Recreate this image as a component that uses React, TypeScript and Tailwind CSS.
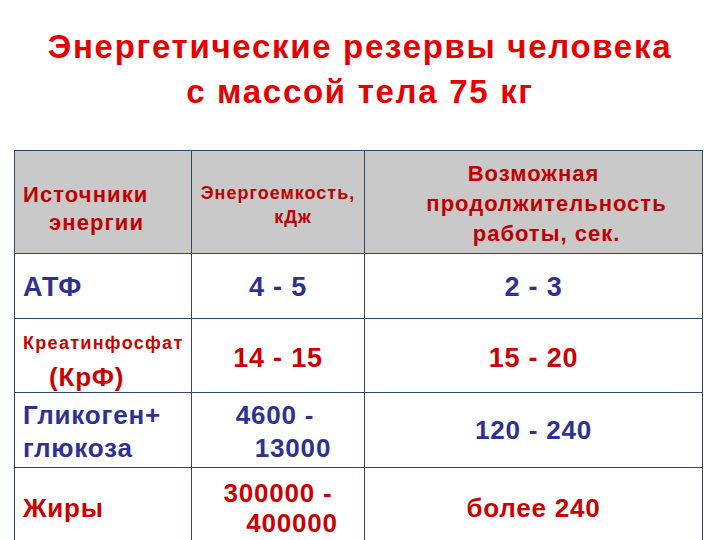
const font = { fontFamily: '"Liberation Sans", Arial, sans-serif' };

function Line({ children, className = "" }: { children: React.ReactNode; className?: string }) {
  return <div className={"whitespace-nowrap " + className}>{children}</div>;
}

export default function App() {
  const cell = "border border-[#2b4b6b] p-0 align-middle";
  return (
    <div className="w-[720px] h-[540px] overflow-hidden bg-white font-bold" style={font}>
      <div className="h-[150px] pt-[24px] text-center text-[33px] leading-[45px] tracking-[1.7px] text-[#e60000]">
        <div>Энергетические резервы человека</div>
        <div>с массой тела 75 кг</div>
      </div>
      <table className="ml-[14px] w-[688px] table-fixed border-collapse">
        <colgroup>
          <col className="w-[177px]" />
          <col className="w-[173px]" />
          <col className="w-[338px]" />
        </colgroup>
        <tbody>
          <tr className="h-[103px] bg-[#c9c9c9] text-[#c00000]">
            <td className={cell}>
              <div className="pt-[14px] pl-[8px] text-[22px] leading-[28px] tracking-[1.1px]">
                <Line>Источники</Line>
                <Line className="pl-[26px]">энергии</Line>
              </div>
            </td>
            <td className={cell}>
              <div className="pt-[6px] text-center text-[18px] leading-[24px] tracking-[1px]">
                <Line>Энергоемкость,</Line>
                <Line className="pl-[30px]">кДж</Line>
              </div>
            </td>
            <td className={cell}>
              <div className="pt-[4px] text-center text-[22px] leading-[30px] tracking-[1px]">
                <Line>Возможная</Line>
                <Line className="pl-[26px]">продолжительность</Line>
                <Line className="pl-[26px]">работы, сек.</Line>
              </div>
            </td>
          </tr>
          <tr className="h-[65px] text-[#2e3192] text-[27px] leading-[30px] tracking-[0.8px]">
            <td className={cell}>
              <div className="pl-[8px] pt-[2px]">АТФ</div>
            </td>
            <td className={cell}>
              <div className="pt-[2px] text-center">4 - 5</div>
            </td>
            <td className={cell}>
              <div className="pt-[2px] text-center">2 - 3</div>
            </td>
          </tr>
          <tr className="h-[74px] text-[#cc0000]">
            <td className={cell}>
              <div className="pl-[8px] pt-[12px]">
                <Line className="text-[18px] leading-[22px] tracking-[1.3px]">Креатинфосфат</Line>
                <Line className="mt-[8px] pl-[26px] text-[26px] leading-[30px] tracking-[0.8px]">(КрФ)</Line>
              </div>
            </td>
            <td className={cell}>
              <div className="pt-[4px] text-center text-[27px] leading-[30px] tracking-[0.8px]">14 - 15</div>
            </td>
            <td className={cell}>
              <div className="pt-[4px] text-center text-[27px] leading-[30px] tracking-[0.8px]">15 - 20</div>
            </td>
          </tr>
          <tr className="h-[75px] text-[#2e3192] text-[26px] tracking-[0.8px]">
            <td className={cell}>
              <div className="pl-[8px] pt-[4px] leading-[33px]">
                <Line>Гликоген+</Line>
                <Line>глюкоза</Line>
              </div>
            </td>
            <td className={cell}>
              <div className="pt-[4px] text-center leading-[33px]">
                <Line className="pr-[6px]">4600 -</Line>
                <Line className="pl-[30px]">13000</Line>
              </div>
            </td>
            <td className={cell}>
              <div className="text-center leading-[30px]">120 - 240</div>
            </td>
          </tr>
          <tr className="h-[80px] text-[#cc0000] text-[26px] leading-[30px] tracking-[0.8px]">
            <td className={cell}>
              <div className="pl-[8px]">Жиры</div>
            </td>
            <td className={cell}>
              <div className="text-center">
                <Line>300000 -</Line>
                <Line className="pl-[28px]">400000</Line>
              </div>
            </td>
            <td className={cell}>
              <div className="text-center">более 240</div>
            </td>
          </tr>
        </tbody>
      </table>
    </div>
  );
}
